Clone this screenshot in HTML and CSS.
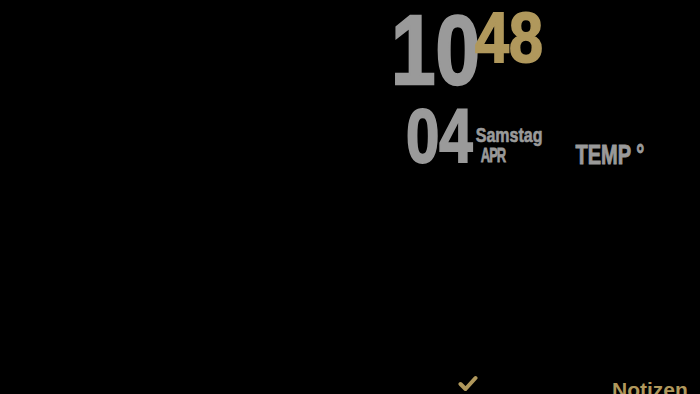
FILE: index.html
```html
<!DOCTYPE html>
<html lang="de">
<head>
<meta charset="utf-8">
<title>Uhr</title>
<link rel="stylesheet" href="styles.css">
</head>
<body>
<div class="screen">
  <div class="clock">
    <div class="time">
      <span class="hours">10</span>
      <span class="minutes">48</span>
    </div>
    <div class="date">
      <span class="day">04</span>
      <div class="daymeta">
        <span class="weekday">Samstag</span>
        <span class="month">APR</span>
      </div>
      <span class="temp">TEMP °</span>
    </div>
  </div>
  <div class="footer">
    <svg class="check" width="20" height="17" viewBox="0 0 20 17" aria-hidden="true">
      <path d="M2.5 9 L7.5 14 L17.5 3" fill="none" stroke="currentColor" stroke-width="4" stroke-linecap="round" stroke-linejoin="round"/>
    </svg>
    <span class="notes">Notizen</span>
  </div>
</div>
</body>
</html>
```

FILE: styles.css
```css
html, body {
  margin: 0;
  padding: 0;
  background: #000;
}
body {
  width: 700px;
  height: 394px;
  overflow: hidden;
  font-family: "Liberation Sans", Arial, sans-serif;
  font-weight: bold;
}
.screen {
  height: 394px;
  display: flex;
  flex-direction: column;
}
.clock {
  margin-left: 391px;
  display: flex;
  flex-direction: column;
}
.time {
  display: flex;
  align-items: flex-start;
  margin-top: 2px;
}
.hours {
  font-size: 80px;
  line-height: 80px;
  color: #9a9a9a;
  -webkit-text-stroke: 2px #9a9a9a;
  transform: scaleY(1.22);
  transform-origin: top left;
}
.minutes {
  font-size: 61px;
  line-height: 61px;
  color: #b0985c;
  -webkit-text-stroke: 1.6px #b0985c;
  margin-top: 2px;
  margin-left: -5px;
  transform: scaleY(1.14);
  transform-origin: top left;
}
.date {
  display: flex;
  align-items: flex-start;
  margin-top: 16px;
  margin-left: 15px;
}
.day {
  font-size: 60px;
  line-height: 60px;
  color: #9a9a9a;
  -webkit-text-stroke: 1.6px #9a9a9a;
  transform: scaleY(1.28);
  transform-origin: top left;
}
.daymeta {
  display: flex;
  flex-direction: column;
  align-items: flex-start;
  margin-top: 28px;
  margin-left: 3px;
  color: #9a9a9a;
}
.weekday {
  font-size: 16px;
  line-height: 16px;
  -webkit-text-stroke: 0.5px #9a9a9a;
  transform: scaleY(1.25);
  transform-origin: top left;
}
.month {
  font-size: 13px;
  line-height: 16px;
  margin-top: 1px;
  margin-left: 5px;
  letter-spacing: -1px;
  -webkit-text-stroke: 0.5px #9a9a9a;
  transform: scaleY(1.6);
  transform-origin: top left;
}
.temp {
  font-size: 20px;
  line-height: 20px;
  color: #9a9a9a;
  -webkit-text-stroke: 0.7px #9a9a9a;
  margin-top: 42px;
  margin-left: 33px;
  transform: scaleY(1.4);
  transform-origin: top left;
}
.footer {
  margin-top: auto;
  height: 19px;
  display: flex;
  align-items: flex-start;
  padding-left: 458px;
  color: #b0985c;
}
.check {
  display: block;
  flex: none;
}
.notes {
  font-size: 21px;
  line-height: 21px;
  margin-top: 4px;
  margin-left: 134px;
}
```
